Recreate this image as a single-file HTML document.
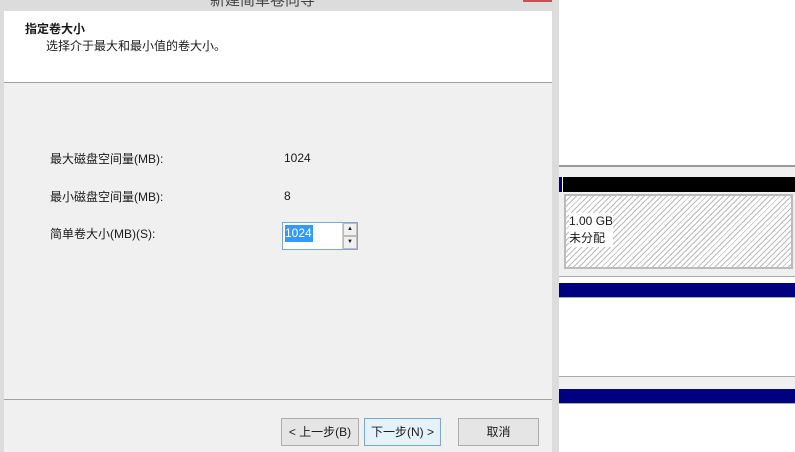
<!DOCTYPE html>
<html><head><meta charset="utf-8"><style>
*{margin:0;padding:0;box-sizing:border-box}
body{width:795px;height:452px;overflow:hidden;background:#fff;position:relative;font-family:"Liberation Sans","Noto Sans CJK SC",sans-serif;font-size:12px;color:#1a1a1a}
.a{position:absolute}
.btn{position:absolute;top:418px;height:28px;border:1px solid #acacac;background:#e5e5e5;text-align:center;line-height:26px;font-size:12px}
</style></head><body>
<div class="a" style="left:0;top:0;width:559px;height:452px;background:#dcdcdc"></div>
<div class="a" style="left:210px;top:-11px;font-size:15px;color:#444">新建简单卷向导</div>
<div class="a" style="left:523px;top:0;width:29px;height:2px;background:#c75050"></div>
<div class="a" style="left:4px;top:11px;width:548px;height:441px;background:#f0f0f0"></div>
<div class="a" style="left:4px;top:11px;width:548px;height:72px;background:#fff;border-bottom:1px solid #a0a0a0"></div>
<div class="a" style="left:25px;top:20px;font-weight:bold;font-size:12px">指定卷大小</div>
<div class="a" style="left:46px;top:37px">选择介于最大和最小值的卷大小。</div>
<div class="a" style="left:50px;top:150px">最大磁盘空间量(MB):</div>
<div class="a" style="left:284px;top:151px">1024</div>
<div class="a" style="left:50px;top:188px">最小磁盘空间量(MB):</div>
<div class="a" style="left:284px;top:189px">8</div>
<div class="a" style="left:50px;top:225px">简单卷大小(MB)(S):</div>
<div class="a" style="left:282px;top:222px;width:76px;height:28px;border:1px solid #7aa7d6;background:#fff"></div>
<div class="a" style="left:285px;top:225px;width:28px;height:17px;background:#3399ff;color:#fff;line-height:17px">1024</div>
<div class="a" style="left:342px;top:223px;width:15px;height:26px;border-left:1px solid #ccc;background:#f0f0f0"></div>
<div class="a" style="left:343px;top:223px;width:14px;height:13px;border:1px solid #bbb;font-size:6px;text-align:center;line-height:11px">▲</div>
<div class="a" style="left:343px;top:236px;width:14px;height:13px;border:1px solid #bbb;font-size:6px;text-align:center;line-height:11px">▼</div>
<div class="a" style="left:4px;top:399px;width:548px;height:1px;background:#a0a0a0"></div>
<div class="btn" style="left:281px;width:78px">&lt; 上一步(B)</div>
<div class="btn" style="left:364px;width:77px;border-color:#7aa7d6;background:#e5f1fb">下一步(N) &gt;</div>
<div class="btn" style="left:458px;width:81px">取消</div>
<div class="a" style="left:559px;top:165px;width:236px;height:2px;background:#999"></div>
<div class="a" style="left:559px;top:167px;width:236px;height:10px;background:#f0f0f0"></div>
<div class="a" style="left:559px;top:177px;width:3px;height:16px;background:#000080"></div>
<div class="a" style="left:563px;top:177px;width:232px;height:15px;background:#000"></div>
<div class="a" style="left:559px;top:192px;width:236px;height:84px;background:#f0f0f0"></div>
<div class="a" style="left:564px;top:194px;width:229px;height:75px;border:2px solid #bbb;background:repeating-linear-gradient(135deg,#fff 0 3px,#bbb 3px 4px)"></div>
<div class="a" style="left:569px;top:213px;background:#fff;line-height:17px">1.00 GB<br>未分配</div>
<div class="a" style="left:559px;top:276px;width:236px;height:1px;background:#aaa"></div>
<div class="a" style="left:559px;top:283px;width:236px;height:14px;background:#000080"></div>
<div class="a" style="left:559px;top:297px;width:236px;height:1px;background:#aaa"></div>
<div class="a" style="left:559px;top:376px;width:236px;height:1px;background:#aaa"></div>
<div class="a" style="left:559px;top:377px;width:236px;height:12px;background:#f0f0f0"></div>
<div class="a" style="left:559px;top:389px;width:236px;height:14px;background:#000080"></div>
<div class="a" style="left:559px;top:403px;width:236px;height:1px;background:#aaa"></div>
</body></html>
